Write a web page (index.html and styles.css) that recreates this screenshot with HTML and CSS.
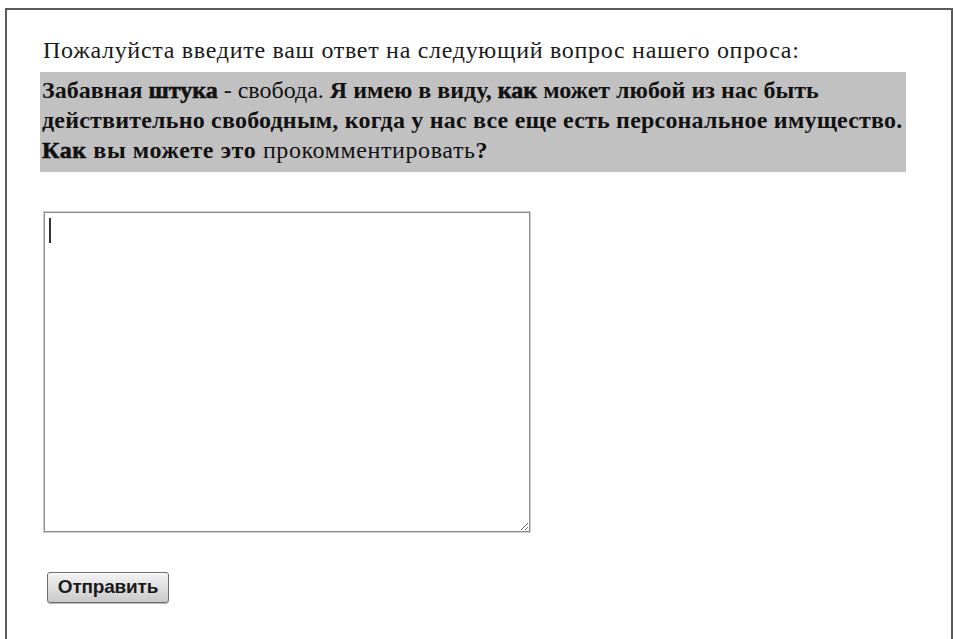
FILE: index.html
```html
<!DOCTYPE html>
<html lang="ru">
<head>
<meta charset="utf-8">
<title>Опрос</title>
<link rel="stylesheet" href="styles.css">
</head>
<body>
<div class="frame">
  <form class="survey">
    <p class="prompt">Пожалуйста введите ваш ответ на следующий вопрос нашего опроса:</p>
    <div class="question">
      <span class="line line-first"><b>Забавная <span class="heavy">штука</span></b> - свобода. <b>Я имею в виду, <span class="heavy">как</span> может любой из нас быть</b></span>
      <span class="line"><b>действительно свободным, когда у нас все еще есть персональное имущество.</b></span>
      <span class="line line-last"><b><span class="heavy">Как</span> вы можете это</b> прокомментировать<b>?</b></span>
    </div>
    <div class="answer">
      <textarea class="answer-box" name="answer" rows="10" cols="50"></textarea>
      <span class="caret"></span>
    </div>
    <button class="submit" type="submit">Отправить</button>
  </form>
</div>
</body>
</html>
```

FILE: styles.css
```css
html, body {
  margin: 0;
  padding: 0;
  background: #ffffff;
}

body {
  padding: 8px 2px 0 5px;
  height: 631px;
  overflow: hidden;
}

.frame {
  height: 100%;
  border-top: 2px solid #5a5a5a;
  border-left: 2px solid #5a5a5a;
  border-right: 2px solid #5a5a5a;
  box-sizing: border-box;
}

.survey {
  padding: 24px 0 0 33px;
  font-family: "Liberation Serif", "Times New Roman", serif;
  font-size: 24px;
  color: #1a1a1a;
}

.prompt {
  margin: 0 0 6px 3px;
  line-height: 32px;
  letter-spacing: 0.7px;
  white-space: nowrap;
}

.question {
  width: 862px;
  padding: 3px 2px 7px 2px;
  background: #c1c1c1;
  color: #111;
  line-height: 30px;
}

.line {
  display: block;
  white-space: nowrap;
  letter-spacing: 0.2px;
}

.line-first {
  letter-spacing: 0;
}

.line-last {
  letter-spacing: 0.6px;
}

.heavy {
  -webkit-text-stroke: 0.6px #111;
}

.answer {
  position: relative;
  width: 486px;
  height: 320px;
  margin: 40px 0 0 4px;
}

.answer-box {
  display: block;
  width: 100%;
  height: 100%;
  box-sizing: border-box;
  margin: 0;
  border: 1px solid #8c8c8c;
  box-shadow: 0 0 0 1px #d0d0d0;
  background: #fff;
  font-family: "Liberation Sans", Arial, sans-serif;
}

.caret {
  position: absolute;
  left: 5px;
  top: 6px;
  width: 2px;
  height: 25px;
  background: #333;
}

.submit {
  display: block;
  margin: 40px 0 0 7px;
  width: 122px;
  height: 31px;
  padding: 0 0 2px;
  border: 1px solid #6b6b6b;
  border-radius: 3px;
  background: linear-gradient(#f4f4f4, #dcdcdc 55%, #c9c9c9);
  box-shadow: inset 0 1px 0 #fff, 0 1px 0 #bdbdbd;
  font-family: "Liberation Sans", Arial, sans-serif;
  font-size: 19px;
  font-weight: bold;
  color: #1a1a1a;
  letter-spacing: -0.2px;
}
```
